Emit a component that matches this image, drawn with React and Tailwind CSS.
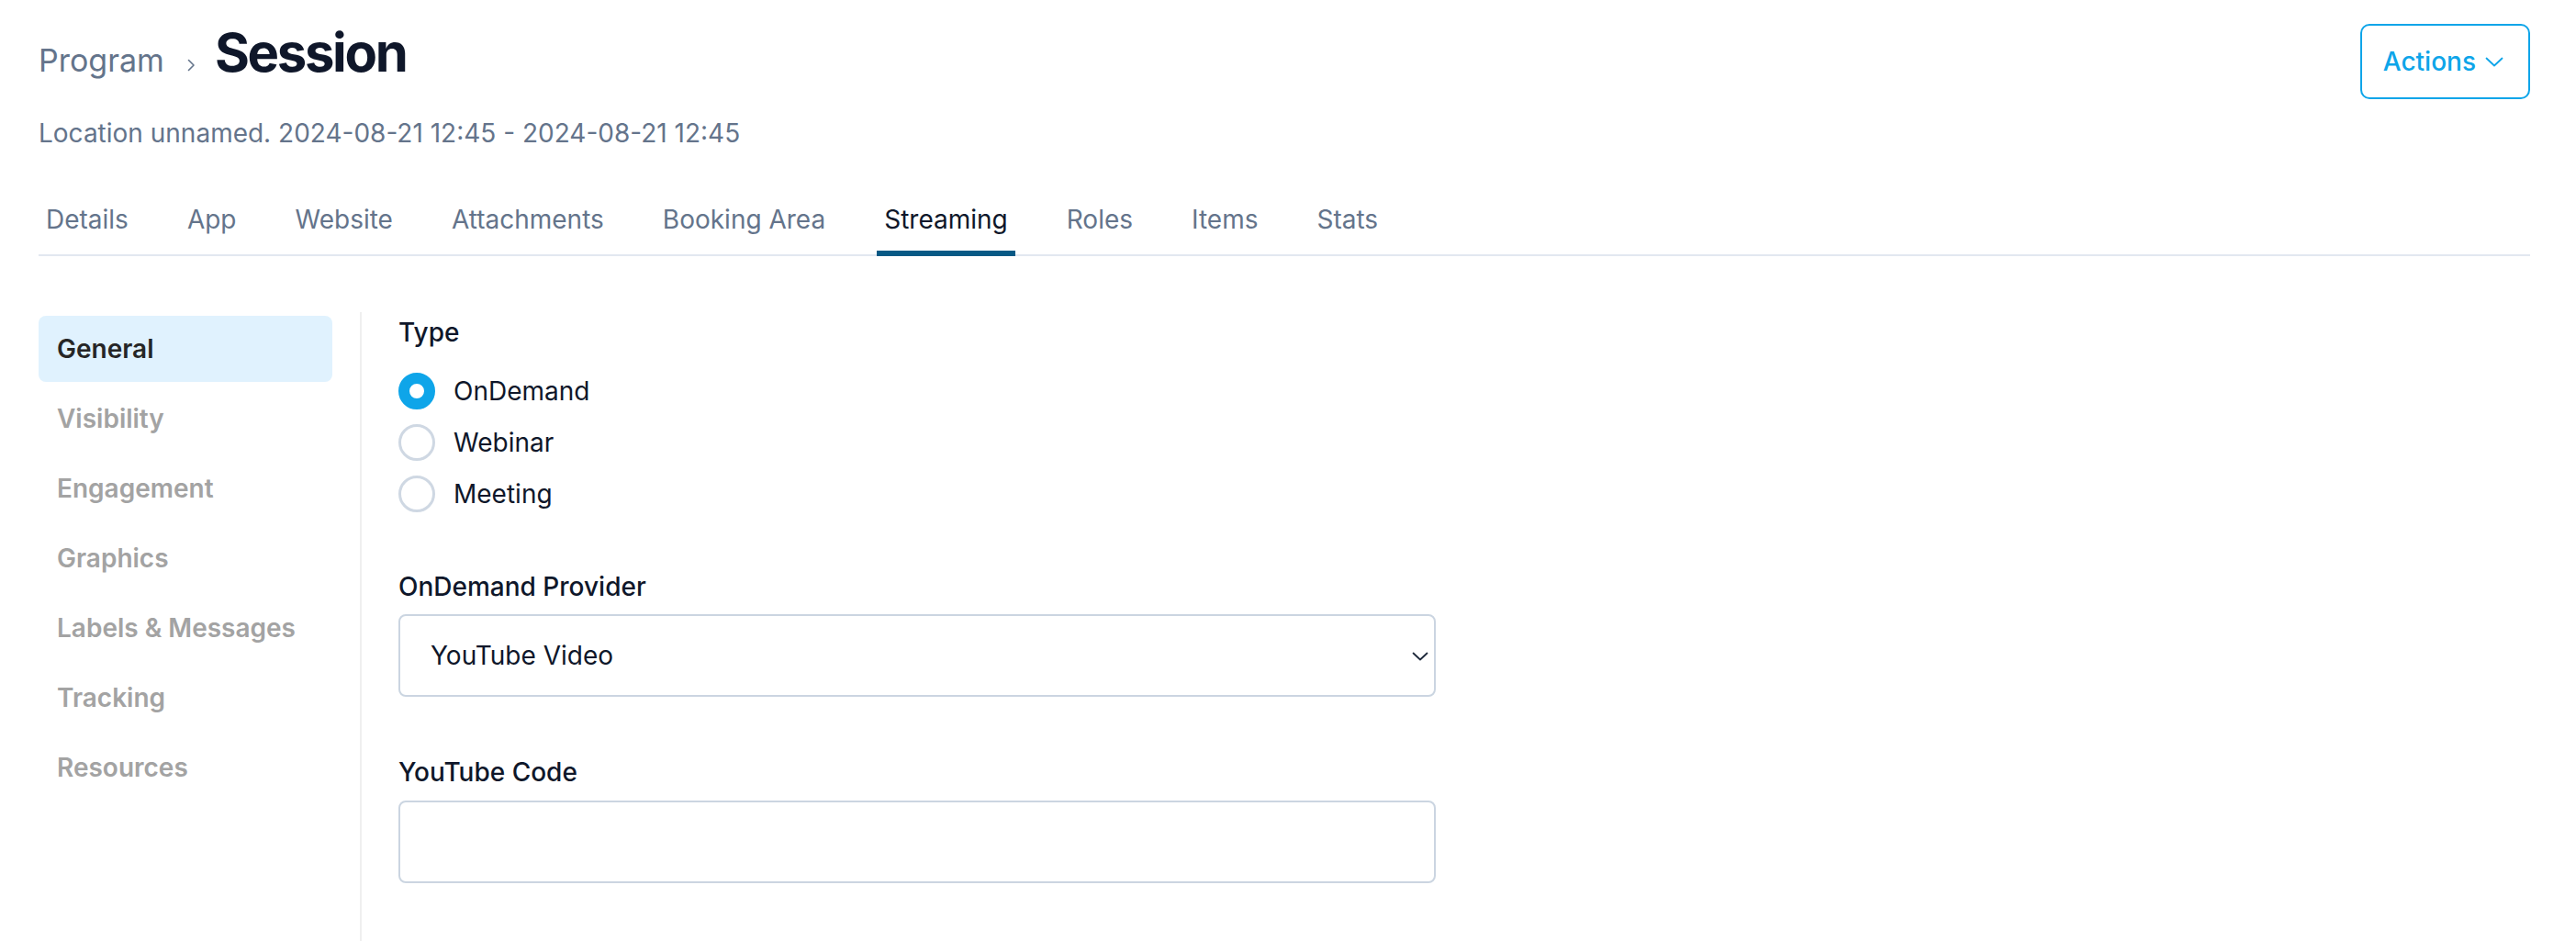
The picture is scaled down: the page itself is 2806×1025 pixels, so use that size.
import { useState } from "react";

const tabs = ["Details", "App", "Website", "Attachments", "Booking Area", "Streaming", "Roles", "Items", "Stats"];
const sections = ["General", "Visibility", "Engagement", "Graphics", "Labels & Messages", "Tracking", "Resources"];
const types = ["OnDemand", "Webinar", "Meeting"];

function Radio({ label, checked, onSelect }) {
  return (
    <label className="flex h-14 cursor-pointer items-center gap-5" onClick={onSelect}>
      <span
        className={`h-10 w-10 shrink-0 rounded-full bg-white ${
          checked ? "border-[12px] border-[#0ea5e9]" : "border-[3px] border-[#cfd8e3]"
        }`}
      />
      <span className="text-[28px] leading-10 text-[#0f172a]">{label}</span>
    </label>
  );
}

export default function App() {
  const [tab, setTab] = useState("Streaming");
  const [section, setSection] = useState("General");
  const [type, setType] = useState("OnDemand");

  return (
    <div className="flex h-[1025px] w-[2806px] flex-col overflow-hidden bg-white pl-[42px] pr-[50px] pt-[21px] font-[Inter,'Noto_Sans',sans-serif]">
      {/* Header */}
      <div className="flex items-start justify-between">
        <div>
          <div className="flex h-[72px] items-baseline">
            <span className="text-[34px] leading-9 text-[#64748b]">Program</span>
            <svg
              viewBox="0 0 10 14"
              className="mb-[4px] ml-[24px] h-[14px] w-[10px]"
              fill="none"
              stroke="#64748b"
              strokeWidth="1.6"
              strokeLinecap="round"
              strokeLinejoin="round"
            >
              <path d="M2.5 1.5 8 7l-5.5 5.5" />
            </svg>
            <h1 className="ml-[21px] text-[58px] font-bold leading-[72px] tracking-[-0.04em] text-[#0f172a]">Session</h1>
          </div>
          <p className="mt-8 text-[28px] leading-10 text-[#64748b]">
            Location unnamed. 2024-08-21 12:45 - 2024-08-21 12:45
          </p>
        </div>
        <button className="mt-[5px] flex h-[82px] items-center gap-[10px] rounded-[10px] border-2 border-[#0ea5e9] pl-[23px] pr-[27px] text-[28px] font-medium text-[#0ea5e9]">
          Actions
          <svg
            viewBox="0 0 20 11"
            className="h-[11px] w-[20px]"
            fill="none"
            stroke="#0ea5e9"
            strokeWidth="1.8"
            strokeLinecap="round"
            strokeLinejoin="round"
          >
            <path d="M1.5 1.5 10 9.5l8.5-8" />
          </svg>
        </button>
      </div>

      {/* Tabs */}
      <nav className="mt-[54px] flex gap-12 border-b-2 border-[#e2e8f0]">
        {tabs.map((t) => (
          <button
            key={t}
            onClick={() => setTab(t)}
            className={`-mb-[2px] border-b-[6px] px-2 pb-[14px] text-[28px] leading-10 ${
              tab === t ? "border-[#075985] text-[#0f172a]" : "border-transparent text-[#64748b]"
            }`}
          >
            {t}
          </button>
        ))}
      </nav>

      {/* Body */}
      <div className="mt-[61px] flex flex-1">
        <aside className="mr-[30px] flex w-80 flex-col gap-1 pt-1">
          {sections.map((s) => (
            <button
              key={s}
              onClick={() => setSection(s)}
              className={`flex h-[72px] items-center rounded-[8px] px-5 text-left text-[28px] font-semibold ${
                section === s ? "bg-[#e0f2fe] text-[#262626]" : "text-[#a3a3a3]"
              }`}
            >
              {s}
            </button>
          ))}
        </aside>

        <div className="flex-1 border-l-2 border-[#efefef] pl-10">
          <div className="mt-[2px] text-[28px] font-medium leading-10 text-[#0f172a]">Type</div>
          <div className="mt-4 flex flex-col">
            {types.map((t) => (
              <Radio key={t} label={t} checked={type === t} onSelect={() => setType(t)} />
            ))}
          </div>

          <div className="mt-[53px] w-[1130px]">
            <div className="text-[28px] font-medium leading-10 text-[#0f172a]">OnDemand Provider</div>
            <div className="relative mt-[10px]">
              <select className="h-[90px] w-full appearance-none rounded-[8px] border-2 border-[#cbd5e1] bg-white pl-[33px] text-[28px] text-[#0f172a] outline-none">
                <option>YouTube Video</option>
                <option>Vimeo Video</option>
              </select>
              <svg
                viewBox="0 0 18 10"
                className="pointer-events-none absolute right-[8px] top-[41px] h-[10px] w-[18px]"
                fill="none"
                stroke="#1e293b"
                strokeWidth="1.8"
                strokeLinecap="round"
                strokeLinejoin="round"
              >
                <path d="M1.5 1.5 9 8.5l7.5-7" />
              </svg>
            </div>
          </div>

          <div className="mt-[62px] w-[1130px]">
            <div className="text-[28px] font-medium leading-10 text-[#0f172a]">YouTube Code</div>
            <input
              type="text"
              className="mt-[11px] h-[90px] w-full rounded-[8px] border-2 border-[#cbd5e1] bg-white px-[33px] text-[28px] text-[#0f172a] outline-none"
            />
          </div>
        </div>
      </div>
    </div>
  );
}
